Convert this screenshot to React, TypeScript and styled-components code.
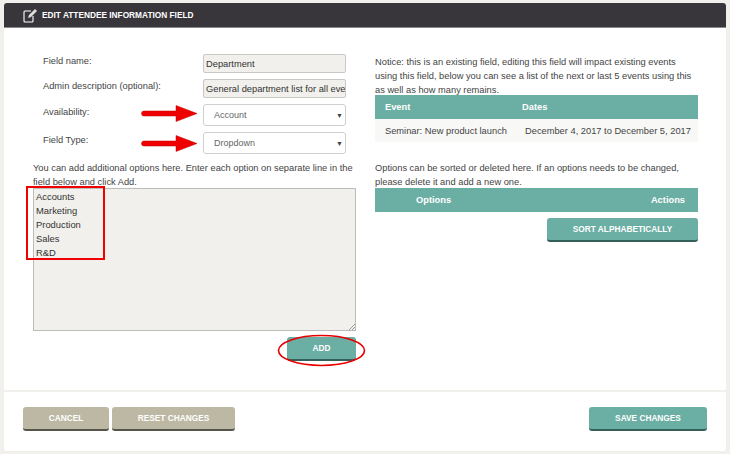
import React from "react";
import styled, { createGlobalStyle } from "styled-components";

const teal = "#6baea3";

const GlobalStyle = createGlobalStyle`
  html, body {
    margin: 0;
    padding: 0;
    background: #f1f0ec;
    font-family: "Liberation Sans", Arial, sans-serif;
  }
`;

const Page = styled.div`
  width: 730px;
  height: 454px;
  padding: 3px 4px;
  box-sizing: border-box;
  position: relative;
  overflow: hidden;
`;

const Panel = styled.div`
  height: 448px;
  background: #fff;
  border-radius: 3px;
  display: flex;
  flex-direction: column;
`;

const Header = styled.div`
  height: 25px;
  flex: none;
  box-sizing: border-box;
  display: flex;
  align-items: center;
  gap: 5px;
  padding-left: 19px;
  background: #38363b;
  border-bottom: 1px solid #8a8a8a;
  border-radius: 3px 3px 0 0;
  color: #fff;
  font-size: 8.3px;
  font-weight: bold;
`;

const Body = styled.div`
  flex: 1;
  display: grid;
  grid-template-columns: 323px 323px;
  column-gap: 19px;
  padding: 26px 0 0 29px;
`;

const LeftColumn = styled.div`
  display: flex;
  flex-direction: column;
`;

const RightColumn = styled.div`
  display: flex;
  flex-direction: column;
`;

const FieldRow = styled.div<{ $height: number; $gap: number }>`
  display: flex;
  height: ${(p) => p.$height}px;
  margin-bottom: ${(p) => p.$gap}px;
  padding-left: 10px;
`;

const FieldLabel = styled.div<{ $drop?: number }>`
  width: 160px;
  margin-top: ${(p) => p.$drop ?? 0}px;
  font-size: 9.3px;
  line-height: 14px;
  color: #444;
`;

const TextField = styled.div`
  width: 143px;
  height: 19px;
  box-sizing: border-box;
  padding: 0 2px;
  background: #f1f0ec;
  border: 1px solid #c8c8c4;
  border-radius: 2px;
  font-size: 9.3px;
  line-height: 18px;
  color: #333;
  white-space: nowrap;
  overflow: hidden;
`;

const SelectField = styled.div`
  width: 143px;
  height: 22px;
  box-sizing: border-box;
  display: flex;
  align-items: center;
  justify-content: space-between;
  padding: 0 2px 0 10px;
  background: #fff;
  border: 1px solid #cfcfcf;
  border-radius: 3px;
  font-size: 9px;
  color: #666;
`;

const Caret = styled.span`
  font-size: 7px;
  color: #444;
`;

const Hint = styled.p<{ $pull?: number }>`
  margin: 1px 0 ${(p) => -(p.$pull ?? 1)}px;
  font-size: 9.3px;
  line-height: 14px;
  color: #444;
`;

const OptionsArea = styled.div`
  position: relative;
  height: 143px;
  box-sizing: border-box;
  padding: 1px 2px;
  background: #f1f0ec;
  border: 1px solid #bcbcb8;
  font-size: 9.4px;
  line-height: 14px;
  color: #333;
`;

const ResizeGrip = styled.svg`
  position: absolute;
  right: 0;
  bottom: 0;
`;

const AddRow = styled.div`
  display: flex;
  justify-content: flex-end;
  margin-top: 6px;
`;

const Button = styled.div<{ $width: number; $tone?: "teal" | "sand" }>`
  width: ${(p) => p.$width}px;
  height: 24px;
  box-sizing: border-box;
  display: flex;
  align-items: center;
  justify-content: center;
  padding-bottom: 1px;
  background: ${(p) => (p.$tone === "sand" ? "#bdb8a3" : teal)};
  border-bottom: 2px solid ${(p) => (p.$tone === "sand" ? "#56534a" : "#35605a")};
  border-radius: 3px;
  color: #fff;
  font-size: 8.3px;
  font-weight: bold;
`;

const Table = styled.div`
  display: flex;
  flex-direction: column;
`;

const TableHead = styled.div<{ $columns: string }>`
  height: 24px;
  display: grid;
  grid-template-columns: ${(p) => p.$columns};
  align-items: center;
  background: ${teal};
  color: #fff;
  font-size: 9.3px;
  font-weight: bold;
`;

const TableRow = styled.div<{ $columns: string }>`
  height: 23px;
  box-sizing: border-box;
  padding-top: 1px;
  display: grid;
  grid-template-columns: ${(p) => p.$columns};
  align-items: center;
  background: #f8f8f6;
  color: #444;
  font-size: 9.3px;
  white-space: nowrap;
`;

const Cell = styled.div<{ $left?: number; $right?: number }>`
  padding-left: ${(p) => p.$left ?? 0}px;
  padding-right: ${(p) => p.$right ?? 0}px;
  text-align: ${(p) => (p.$right ? "right" : "left")};
`;

const Spacer = styled.div<{ $height: number }>`
  height: ${(p) => p.$height}px;
  flex: none;
`;

const SortRow = styled.div`
  display: flex;
  justify-content: flex-end;
  margin-top: 6px;
`;

const Footer = styled.div`
  height: 61px;
  flex: none;
  box-sizing: border-box;
  display: flex;
  align-items: flex-start;
  gap: 3px;
  padding: 15px 19px 0;
  border-top: 2px solid #f1f0ec;
`;

const FooterSpacer = styled.div`
  flex: 1;
`;

const Marker = styled.svg<{ $x: number; $y: number }>`
  position: absolute;
  left: ${(p) => p.$x}px;
  top: ${(p) => p.$y}px;
  overflow: visible;
`;

const RedBox = styled.div`
  position: absolute;
  left: 26px;
  top: 186px;
  width: 79px;
  height: 74px;
  box-sizing: border-box;
  border: 2px solid #f00000;
`;

const EditIcon = () => (
  <svg width="14" height="15" viewBox="0 0 14 15" fill="none">
    <path d="M8 3H2a1 1 0 0 0-1 1v9a1 1 0 0 0 1 1h7a1 1 0 0 0 1-1V8" stroke="#fff" strokeWidth="1.1" />
    <path d="M5 10l1-3 6-6 2 2-6 6z" fill="#ddd" />
  </svg>
);

const Arrow = ({ x, y }: { x: number; y: number }) => (
  <Marker $x={x} $y={y} width="56" height="17" viewBox="0 0 56 17">
    <path d="M2 6H34V0.5L55 8.5 34 16.5V11H2a2.5 2.5 0 0 1 0-5z" fill="#ee0000" stroke="#c40000" strokeWidth="0.5" />
  </Marker>
);

export default function App() {
  const eventColumns = "147px 176px";
  const optionColumns = "1fr 1fr";

  return (
    <Page>
      <GlobalStyle />
      <Panel>
        <Header>
          <EditIcon />
          EDIT ATTENDEE INFORMATION FIELD
        </Header>
        <Body>
          <LeftColumn>
            <FieldRow $height={19} $gap={6}>
              <FieldLabel>Field name:</FieldLabel>
              <TextField>Department</TextField>
            </FieldRow>
            <FieldRow $height={19} $gap={6}>
              <FieldLabel>Admin description (optional):</FieldLabel>
              <TextField>General department list for all events</TextField>
            </FieldRow>
            <FieldRow $height={22} $gap={6}>
              <FieldLabel $drop={1}>Availability:</FieldLabel>
              <SelectField>
                Account
                <Caret>▼</Caret>
              </SelectField>
            </FieldRow>
            <FieldRow $height={22} $gap={6}>
              <FieldLabel $drop={1}>Field Type:</FieldLabel>
              <SelectField>
                Dropdown
                <Caret>▼</Caret>
              </SelectField>
            </FieldRow>
            <Hint>
              You can add additional options here. Enter each option on separate line in the
              field below and click Add.
            </Hint>
            <OptionsArea>
              Accounts
              <br />
              Marketing
              <br />
              Production
              <br />
              Sales
              <br />
              R&amp;D
              <ResizeGrip width="6" height="6" viewBox="0 0 6 6">
                <path d="M0 6L6 0M3 6L6 3" stroke="#888" strokeWidth="0.8" />
              </ResizeGrip>
            </OptionsArea>
            <AddRow>
              <Button $width={69}>ADD</Button>
            </AddRow>
          </LeftColumn>
          <RightColumn>
            <Hint $pull={2}>
              Notice: this is an existing field, editing this field will impact existing events
              using this field, below you can see a list of the next or last 5 events using this
              as well as how many remains.
            </Hint>
            <Table>
              <TableHead $columns={eventColumns}>
                <Cell $left={10}>Event</Cell>
                <Cell>Dates</Cell>
              </TableHead>
              <TableRow $columns={eventColumns}>
                <Cell $left={10}>Seminar: New product launch</Cell>
                <Cell $left={3}>December 4, 2017 to December 5, 2017</Cell>
              </TableRow>
            </Table>
            <Spacer $height={18} />
            <Hint>
              Options can be sorted or deleted here. If an options needs to be changed,
              please delete it and add a new one.
            </Hint>
            <Table>
              <TableHead $columns={optionColumns}>
                <Cell $left={41}>Options</Cell>
                <Cell $right={13}>Actions</Cell>
              </TableHead>
            </Table>
            <SortRow>
              <Button $width={151}>SORT ALPHABETICALLY</Button>
            </SortRow>
          </RightColumn>
        </Body>
        <Footer>
          <Button $width={86} $tone="sand">CANCEL</Button>
          <Button $width={123} $tone="sand">RESET CHANGES</Button>
          <FooterSpacer />
          <Button $width={118}>SAVE CHANGES</Button>
        </Footer>
      </Panel>

      {/* annotations drawn on top of the screenshot */}
      <Arrow x={142} y={105} />
      <Arrow x={142} y={135} />
      <RedBox />
      <Marker $x={278} $y={335} width="90" height="32" viewBox="0 0 90 32">
        <ellipse cx="43.5" cy="15.5" rx="43" ry="15" fill="none" stroke="#e80000" strokeWidth="1.6" />
      </Marker>
    </Page>
  );
}
